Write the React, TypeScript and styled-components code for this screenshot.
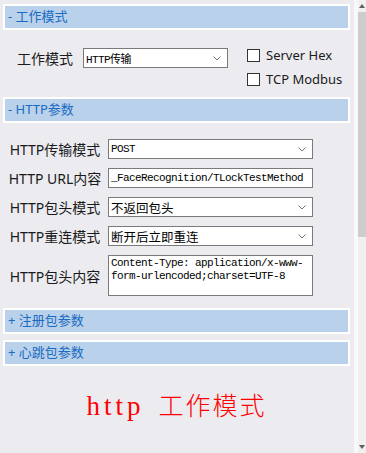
import React from 'react';
import styled, { createGlobalStyle } from 'styled-components';

const GlobalStyle = createGlobalStyle`
  html, body {
    margin: 0;
    padding: 0;
    background: #ececf0;
  }
  body {
    font-family: "Noto Sans", "Noto Sans CJK SC", sans-serif;
  }
`;

const Window = styled.div`
  display: flex;
  width: 366px;
  height: 453px;
  overflow: hidden;
  background: #ececf0;
`;

const Panel = styled.div`
  width: 354px;
  box-sizing: border-box;
  padding: 4px 4px 0 3px;
  display: flex;
  flex-direction: column;
`;

const Divider = styled.div`
  width: 4px;
  background: #f9f9fb;
`;

const ScrollTrack = styled.div`
  width: 8px;
  background: #f0f0f0;
  display: flex;
  flex-direction: column;
`;

const ScrollArrow = styled.div`
  height: 12px;
  display: flex;
  align-items: center;
  justify-content: center;
`;

const ScrollThumb = styled.div`
  height: 225px;
  background: #cdcdcd;
`;

const ScrollSpacer = styled.div`
  flex: 1;
`;

const SectionHeader = styled.div<{ $gap?: number }>`
  height: 26px;
  box-sizing: border-box;
  border: 2px solid #fff;
  background: #b9d1ea;
  color: #1a6bc2;
  font-size: 13px;
  line-height: 21px;
  padding-left: 3px;
  margin-top: ${(p) => p.$gap || 0}px;
  white-space: pre;
`;

const ModeBody = styled.div`
  height: 67px;
  box-sizing: border-box;
  padding: 18px 0 0 14px;
  display: flex;
  align-items: flex-start;
`;

const ModeRow = styled.div`
  display: flex;
  align-items: center;
  gap: 10px;
`;

const Label = styled.span`
  font-size: 14px;
  color: #1a1a1a;
  white-space: nowrap;
`;

const CheckGroup = styled.div`
  margin-left: 19px;
  display: flex;
  flex-direction: column;
  gap: 10px;
`;

const CheckItem = styled.label`
  display: flex;
  align-items: center;
  gap: 6px;
  height: 14px;
  font-size: 13px;
  color: #1a1a1a;
`;

const CheckBox = styled.span`
  width: 13px;
  height: 13px;
  box-sizing: border-box;
  border: 1px solid #333;
  background: #fff;
`;

const HttpBody = styled.div`
  padding: 16px 0 12px 2px;
  display: grid;
  grid-template-columns: 100px 205px;
  column-gap: 3px;
  row-gap: 9px;
  align-items: center;
`;

const RowLabel = styled(Label)`
  text-align: center;
`;

const Field = styled.div<{ $width?: number; $cjk?: boolean }>`
  width: ${(p) => (p.$width ? `${p.$width}px` : '100%')};
  height: 20px;
  box-sizing: border-box;
  border: 1px solid #7a7a7a;
  background: #fff;
  display: flex;
  align-items: center;
  justify-content: space-between;
  padding: 0 6px 0 2px;
  color: #000;
  font-family: ${(p) =>
    p.$cjk
      ? '"Noto Sans CJK SC", sans-serif'
      : '"Liberation Mono", "Noto Sans CJK SC", monospace'};
  font-size: ${(p) => (p.$cjk ? '12.5px' : '11px')};
  letter-spacing: ${(p) => (p.$cjk ? '0' : '-0.6px')};
  white-space: nowrap;
  overflow: hidden;
`;

const TextArea = styled.div`
  height: 41px;
  box-sizing: border-box;
  border: 1px solid #7a7a7a;
  background: #fff;
  padding: 1px 2px;
  font-family: "Liberation Mono", monospace;
  font-size: 11px;
  letter-spacing: -0.6px;
  line-height: 13px;
  color: #000;
  white-space: pre;
`;

const Banner = styled.div`
  margin-top: 22px;
  text-align: center;
  color: #ff0000;
  font-size: 25px;
  line-height: 32px;
  white-space: nowrap;
`;

const BannerLatin = styled.span`
  font-family: "Liberation Serif", serif;
  font-size: 27px;
  letter-spacing: 4px;
  margin-right: 14px;
`;

const BannerCjk = styled.span`
  font-family: "Noto Sans CJK SC", sans-serif;
  font-weight: 300;
  letter-spacing: 2px;
`;

const Chevron = () => (
  <svg width="8" height="5" viewBox="0 0 8 5">
    <polyline points="0.5,0.5 4,4 7.5,0.5" fill="none" stroke="#666" strokeWidth="0.9" />
  </svg>
);

const Select = ({ value, width, cjk }: { value: string; width?: number; cjk?: boolean }) => (
  <Field $width={width} $cjk={cjk}>
    <span>{value}</span>
    <Chevron />
  </Field>
);

const App = () => (
  <>
    <GlobalStyle />
    <Window>
      <Panel>
        <SectionHeader>- 工作模式</SectionHeader>
        <ModeBody>
          <ModeRow>
            <Label>工作模式</Label>
            <Select value="HTTP传输" width={145} />
          </ModeRow>
          <CheckGroup>
            <CheckItem>
              <CheckBox />
              Server Hex
            </CheckItem>
            <CheckItem>
              <CheckBox />
              TCP Modbus
            </CheckItem>
          </CheckGroup>
        </ModeBody>

        <SectionHeader>- HTTP参数</SectionHeader>
        <HttpBody>
          <RowLabel>HTTP传输模式</RowLabel>
          <Select value="POST" />
          <RowLabel>HTTP URL内容</RowLabel>
          <Field>
            <span>_FaceRecognition/TLockTestMethod</span>
          </Field>
          <RowLabel>HTTP包头模式</RowLabel>
          <Select value="不返回包头" cjk />
          <RowLabel>HTTP重连模式</RowLabel>
          <Select value="断开后立即重连" cjk />
          <RowLabel>HTTP包头内容</RowLabel>
          <TextArea>{'Content-Type: application/x-www-\nform-urlencoded;charset=UTF-8'}</TextArea>
        </HttpBody>

        <SectionHeader>+ 注册包参数</SectionHeader>
        <SectionHeader $gap={6}>+ 心跳包参数</SectionHeader>

        <Banner>
          <BannerLatin>http</BannerLatin>
          <BannerCjk>工作模式</BannerCjk>
        </Banner>
      </Panel>
      <Divider />
      <ScrollTrack>
        <ScrollArrow>
          <svg width="6" height="4" viewBox="0 0 6 4">
            <polygon points="0,4 3,0 6,4" fill="#606060" />
          </svg>
        </ScrollArrow>
        <ScrollThumb />
        <ScrollSpacer />
        <ScrollArrow>
          <svg width="6" height="4" viewBox="0 0 6 4">
            <polygon points="0,0 3,4 6,0" fill="#606060" />
          </svg>
        </ScrollArrow>
      </ScrollTrack>
    </Window>
  </>
);

export default App;
